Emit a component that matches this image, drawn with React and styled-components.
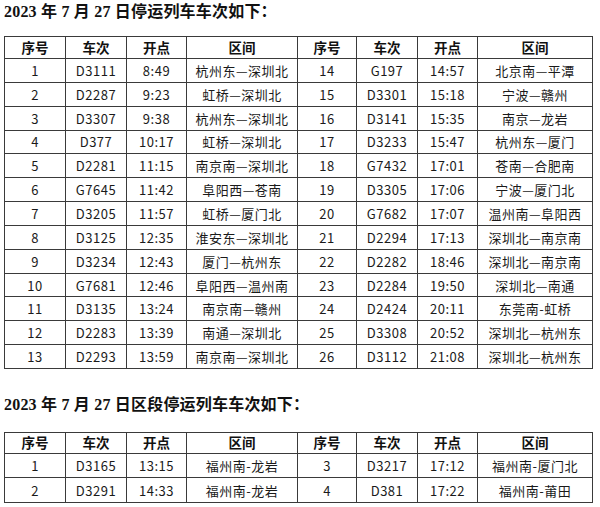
import styled, { createGlobalStyle } from "styled-components";

const GlobalStyle = createGlobalStyle`
  body {
    margin: 0;
    background: #ffffff;
    color: #111111;
  }
`;

const Page = styled.div`
  padding: 0 4px;
  width: 588px;
`;

const Title = styled.div`
  height: 24px;
  line-height: 24px;
  margin-top: ${(p) => p.top || 0}px;
  font-family: "Liberation Serif", "Noto Sans CJK SC", serif;
  font-size: 16px;
  font-weight: bold;
  letter-spacing: 0.2px;
  white-space: nowrap;
`;

const Table = styled.table`
  width: 588px;
  margin-top: ${(p) => p.top}px;
  border-collapse: collapse;
  table-layout: fixed;
  font-family: "Noto Sans CJK SC", sans-serif;
  font-size: 13px;
  color: #1a1a1a;
`;

const Row = styled.tr`
  height: ${(p) => p.h}px;
`;

const Th = styled.th`
  border: 1px solid #3a3a3a;
  padding: 0;
  font-weight: 700;
  font-size: 13.5px;
  text-align: center;
  line-height: 1;
  color: #111;
`;

const Td = styled.td`
  border: 1px solid #3a3a3a;
  padding: 0;
  text-align: center;
  line-height: 1;
  letter-spacing: 0.5px;
  white-space: nowrap;
`;

const widths = [61, 61, 60, 111, 59, 61, 60, 115];
const heads = ["序号", "车次", "开点", "区间", "序号", "车次", "开点", "区间"];

const main = [
  ["1", "D3111", "8:49", "杭州东—深圳北", "14", "G197", "14:57", "北京南—平潭"],
  ["2", "D2287", "9:23", "虹桥—深圳北", "15", "D3301", "15:18", "宁波—赣州"],
  ["3", "D3307", "9:38", "杭州东—深圳北", "16", "D3141", "15:35", "南京—龙岩"],
  ["4", "D377", "10:17", "虹桥—深圳北", "17", "D3233", "15:47", "杭州东—厦门"],
  ["5", "D2281", "11:15", "南京南—深圳北", "18", "G7432", "17:01", "苍南—合肥南"],
  ["6", "G7645", "11:42", "阜阳西—苍南", "19", "D3305", "17:06", "宁波—厦门北"],
  ["7", "D3205", "11:57", "虹桥—厦门北", "20", "G7682", "17:07", "温州南—阜阳西"],
  ["8", "D3125", "12:35", "淮安东—深圳北", "21", "D2294", "17:13", "深圳北—南京南"],
  ["9", "D3234", "12:43", "厦门—杭州东", "22", "D2282", "18:46", "深圳北—南京南"],
  ["10", "G7681", "12:46", "阜阳西—温州南", "23", "D2284", "19:50", "深圳北—南通"],
  ["11", "D3135", "13:24", "南京南—赣州", "24", "D2424", "20:11", "东莞南-虹桥"],
  ["12", "D2283", "13:39", "南通—深圳北", "25", "D3308", "20:52", "深圳北—杭州东"],
  ["13", "D2293", "13:59", "南京南—深圳北", "26", "D3112", "21:08", "深圳北—杭州东"],
];

const section = [
  ["1", "D3165", "13:15", "福州南-龙岩", "3", "D3217", "17:12", "福州南-厦门北"],
  ["2", "D3291", "14:33", "福州南-龙岩", "4", "D381", "17:22", "福州南-莆田"],
];

function TrainTable({ rows, top, headH, rowH }) {
  return (
    <Table top={top}>
      <colgroup>
        {widths.map((w, i) => (
          <col key={i} style={{ width: w }} />
        ))}
      </colgroup>
      <thead>
        <Row h={headH}>
          {heads.map((h, i) => (
            <Th key={i}>{h}</Th>
          ))}
        </Row>
      </thead>
      <tbody>
        {rows.map((r, i) => (
          <Row key={i} h={rowH}>
            {r.map((c, j) => (
              <Td key={j}>{c}</Td>
            ))}
          </Row>
        ))}
      </tbody>
    </Table>
  );
}

export default function App() {
  return (
    <>
      <GlobalStyle />
      <Page>
        <Title>2023 年 7 月 27 日停运列车车次如下：</Title>
        <TrainTable rows={main} top={12} headH={22} rowH={23.85} />
        <Title top={24}>2023 年 7 月 27 日区段停运列车车次如下：</Title>
        <TrainTable rows={section} top={15} headH={20.6} rowH={24.7} />
      </Page>
    </>
  );
}
